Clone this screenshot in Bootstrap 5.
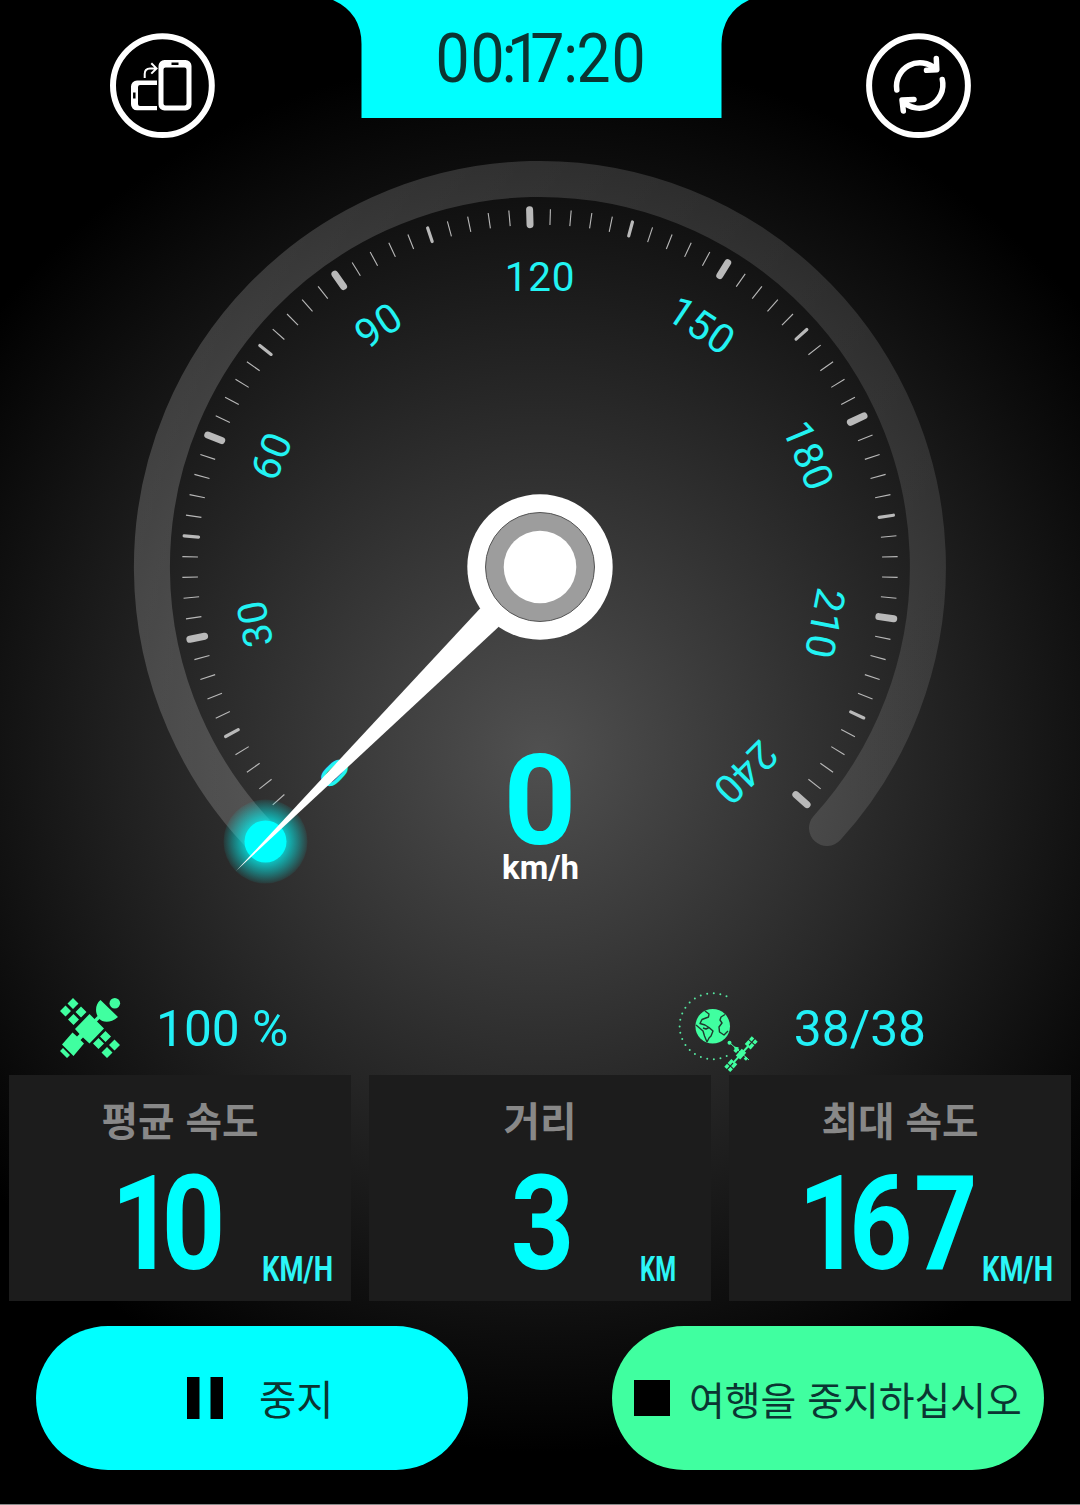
<!DOCTYPE html>
<html lang="ko">
<head>
<meta charset="utf-8">
<meta name="viewport" content="width=device-width, initial-scale=1">
<title>km/h</title>
<link href="https://cdn.jsdelivr.net/npm/bootstrap@5.3.0/dist/css/bootstrap.min.css" rel="stylesheet">
<style>
body{background:#000;font-family:Roboto,"Noto Sans CJK KR",sans-serif}
.screen{width:1080px;height:1505px;background:radial-gradient(circle 700px at 540px 752px,#505050,#000);border-bottom:1px solid #8a8a8a;overflow:hidden}
.topbar{height:150px}
.round-btn{width:106px;height:106px;margin-top:33px}
.clock{width:416px;height:118px;margin-left:2px}
.dial{height:830px}
.dial-num{font-size:40.5px;letter-spacing:.8px;fill:#22f3f3;text-anchor:middle}
.status{height:95px;font-size:49.7px;color:#22f0f7;line-height:1}
.panels{gap:18px;padding:0 9px}
.panel{height:226px;background:#1c1c1c;padding-top:20px}
.panel-title{font:700 39.7px/48px "Noto Sans CJK KR",sans-serif;color:#888}
.readout{height:146px;margin-top:12px;overflow:visible}
.lcd{font-family:Roboto,sans-serif;font-weight:700;fill:#0ff;text-anchor:middle}
.unit{font-family:Roboto,sans-serif;font-weight:700;font-size:35px;fill:#2cf6f6}
.actions{padding:25px 36px 0}
.action{width:432px;height:144px;border-radius:72px;font-family:"Noto Sans CJK KR",sans-serif;color:#0b3532;border:0}
.action-pause{background:#0ff;padding-left:151px;font-size:40.5px}
.action-stop{background:#40ffa0;padding-left:22px;font-size:38.9px}
</style>
</head>
<body>
<main class="screen d-flex flex-column">
  <header class="topbar d-flex justify-content-between align-items-start px-0">
    <button class="round-btn btn p-0 border-0" style="margin-left:109px" aria-label="rotate">
      <svg width="106" height="106" viewBox="109 33 106 106" fill="none" stroke="#fff" class="d-block">
        <circle cx="162.4" cy="85.6" r="49.4" stroke-width="6"/>
        <path d="M157 80.5H137a6 6 0 0 0-6 6V104a6 6 0 0 0 6 6.300H157V106H140a2 2 0 0 1-2-2V87a2 2 0 0 1 2-2H157Z" fill="#fff" stroke="none"/>
        <path d="M134.300 92.500V98.500" stroke="#000" stroke-width="2.500"/>
        <path fill-rule="evenodd" fill="#fff" stroke="none" d="M164.500 60H185.500A6 6 0 0 1 191.500 66V104.500A6 6 0 0 1 185.500 110.500H164.500A6 6 0 0 1 158.500 104.500V66A6 6 0 0 1 164.500 60ZM165.500 67.500A2 2 0 0 0 163.500 69.500V103.500A2 2 0 0 0 165.500 105.500H184.500A2 2 0 0 0 186.500 103.500V69.500A2 2 0 0 0 184.500 67.500ZM171.500 62.500V65H178.500V62.500Z"/>
        <path d="M144.700 78V74Q144.700 68.500 150 68.500H156M151.300 63.200L156.500 68.400L151.300 73.600" stroke-width="2"/>
      </svg>
    </button>
    <svg class="clock d-block" viewBox="333 0 416 118">
      <path d="M333 0Q361.500 13 361.500 44V118H721.500V44Q722 13 749 0Z" fill="#0ff"/>
      <text transform="scale(.88 1)" y="82" font-size="69" font-family="Roboto" fill="#0b3532" text-anchor="middle" x="514.200 554 578.500 595.500 622 648.300 674.400 714.200">00:17:20</text>
    </svg>
    <button class="round-btn btn p-0 border-0" style="margin-right:109px" aria-label="reset">
      <svg width="106" height="106" viewBox="865 33 106 106" fill="none" stroke="#fff" class="d-block">
        <circle cx="918.500" cy="85.600" r="49.400" stroke-width="6"/>
        <g stroke-width="5.500" stroke-linecap="round" stroke-linejoin="round">
          <path d="M896.800 90A23.500 23.500 0 0 1 936 69M936.300 58.500L936.800 69.700L926.500 70.300"/>
          <path d="M942.300 79.500A23.500 23.500 0 0 1 902.500 101M914 99.400L902 100L903.300 111"/>
        </g>
      </svg>
    </button>
  </header>

  <svg class="dial d-block w-100" viewBox="0 150 1080 830" font-family="Roboto">
    <defs>
      <linearGradient id="track" gradientUnits="userSpaceOnUse" x1="134" y1="0" x2="946" y2="0"><stop stop-color="#fff" stop-opacity=".18"/><stop offset="1" stop-color="#fff" stop-opacity=".11"/></linearGradient>
      <radialGradient id="glow"><stop offset=".45" stop-color="#0ff" stop-opacity=".75"/><stop offset=".75" stop-color="#0ff" stop-opacity=".38"/><stop offset="1" stop-color="#0ff" stop-opacity=".06"/></radialGradient>
    </defs>
    <path d="M265.600 841.400A388 388 0 1 1 827 828" fill="none" stroke="url(#track)" stroke-width="36" stroke-linecap="round"/>
    <g id="ticks" stroke="#b9b9b9"></g>
    <g id="nums"></g>
    <circle cx="265.500" cy="841.500" r="42" fill="url(#glow)"/>
    <circle cx="265.500" cy="841.500" r="21" fill="#0ff"/>
    <path d="M236 871L480.500 608L499 626.500Z" fill="#fff"/>
    <circle cx="540" cy="567" r="72.700" fill="#fff"/>
    <circle cx="540" cy="567" r="54.500" fill="#9d9d9d" stroke="#555" stroke-width="1"/>
    <circle cx="540" cy="567" r="36.300" fill="#fff"/>
    <text x="540" y="843.500" font-size="127" font-weight="700" fill="#0ff" text-anchor="middle">0</text>
    <text x="540.500" y="879" font-size="33" font-weight="700" fill="#fff" text-anchor="middle">km/h</text>
  </svg>

  <section class="status d-flex align-items-center">
    <svg width="64" height="64" viewBox="58 995 64 64" fill="#40ffa0" style="margin-left:58px">
      <path d="M73 997L78.500 1002.500L73 1008L67.500 1002.500ZM65.500 1004.500L71 1010L65.500 1015.500L60 1010ZM81 1005.500L86.500 1011L81 1016.500L75.500 1011ZM73.500 1013L79 1018.500L73.500 1024L68 1018.500Z"/>
      <path d="M105.500 1030L111 1035.500L105.500 1041L100 1035.500ZM98.500 1037L104 1042.500L98.500 1048L93 1042.500ZM114.500 1038.500L120 1044L114.500 1049.500L109 1044ZM107 1046L112.500 1051.500L107 1057L101.500 1051.500Z"/>
      <path d="M89.500 1013L104 1027.500L89.500 1042.500L83 1036.500L80.500 1039L84 1042.500L73.500 1055L62 1043.500L72.500 1031.500L77 1035.500L79.500 1033L75 1028ZM63 1047L70 1054L67 1057L60 1050Z"/>
      <path d="M100.500 999L118 1016C110 1023 102 1021 99.500 1018L95.500 1022L93 1019.500L97.500 1015C95 1010 95.500 1003 100.500 999Z"/>
      <circle cx="114.800" cy="1002.200" r="5.300"/>
    </svg>
    <span class="pt-1" style="margin-left:34px">100 %</span>
    <svg width="82" height="84" viewBox="677 990 82 84" style="margin-left:auto;margin-right:35px;margin-top:9px" fill="#40ffa0">
      <path d="M726.500 996.300A33 33 0 1 0 730.500 1054" fill="none" stroke="#55e8a0" stroke-width="2" stroke-linecap="round" stroke-dasharray="0 6.600"/>
      <circle cx="712.700" cy="1026.300" r="17.300"/>
      <g fill="none" stroke="#1f3a2d" stroke-width="1.400" stroke-linejoin="round">
        <path d="M705 1011L709 1014L708.500 1017L702 1019.500L700 1023.500L705 1025L709 1027.500L713 1031L711 1036L709 1038L707 1042M696 1025L703 1031L704.500 1036L707 1042M709 1027.500L706 1029L703 1028"/>
        <path d="M725 1014.500L721 1017L720 1020L722 1023L719 1027L719.500 1032L724 1035L728 1031"/>
      </g>
      <circle cx="729.500" cy="1042.800" r="2"/>
      <path d="M730 1043L749 1060" stroke="#40ffa0" stroke-width="1"/>
      <g transform="translate(741 1054.200) rotate(-48)">
        <rect x="-4.500" y="-3" width="9" height="6"/><rect x="-2.500" y="-8" width="5" height="3.500"/><rect x="-1.500" y="5" width="3" height="3"/>
        <rect x="-12" y="-1" width="24" height="2"/>
        <path d="M-20.500-4H-16.500V-.6H-20.500ZM-20.500 .6H-16.500V4H-20.500ZM-15.500-4H-10V-.6H-15.500ZM-15.500 .6H-10V4H-15.500ZM10-4H15.500V-.6H10ZM10 .6H15.500V4H10ZM16.500-4H20.500V-.6H16.500ZM16.500 .6H20.500V4H16.500Z"/>
      </g>
      <path d="M734 1046.500L739 1047.500L735 1051Z"/>
    </svg>
    <span class="pt-1" style="margin-right:154px">38/38</span>
  </section>

  <section class="panels d-flex">
    <div class="panel flex-fill text-center">
      <div class="panel-title">평균 속도</div>
      <svg class="readout d-block w-100" viewBox="9 1155 342 146">
        <text class="lcd" transform="scale(.84 1)" y="1269" font-size="132" x="170 230.500">10</text>
        <text class="unit" x="262" y="1281" textLength="71" lengthAdjust="spacingAndGlyphs">KM/H</text>
      </svg>
    </div>
    <div class="panel flex-fill text-center">
      <div class="panel-title">거리</div>
      <svg class="readout d-block w-100" viewBox="369 1155 342 146">
        <text class="lcd" transform="scale(.84 1)" y="1269" font-size="132" x="646">3</text>
        <text class="unit" x="640" y="1281" textLength="36" lengthAdjust="spacingAndGlyphs">KM</text>
      </svg>
    </div>
    <div class="panel flex-fill text-center">
      <div class="panel-title">최대 속도</div>
      <svg class="readout d-block w-100" viewBox="729 1155 342 146">
        <text class="lcd" transform="scale(.84 1)" y="1269" font-size="132" x="988 1048.500 1126">167</text>
        <text class="unit" x="982" y="1281" textLength="71" lengthAdjust="spacingAndGlyphs">KM/H</text>
      </svg>
    </div>
  </section>

  <section class="actions d-flex justify-content-between">
    <button class="action action-pause d-flex align-items-center">
      <svg width="36" height="42" class="flex-shrink-0"><path d="M0 0H12.500V42H0ZM23.500 0H36V42H23.500Z"/></svg>
      <span class="text-nowrap" style="margin-left:36px">중지</span>
    </button>
    <button class="action action-stop d-flex align-items-center">
      <svg width="36" height="36" class="flex-shrink-0"><path d="M0 0H36V36H0Z"/></svg>
      <span class="text-nowrap" style="margin-left:19px">여행을 중지하십시오</span>
    </button>
  </section>
</main>
<script src="https://cdn.jsdelivr.net/npm/bootstrap@5.3.0/dist/js/bootstrap.bundle.min.js"></script>
<script>
const ns = 'http://www.w3.org/2000/svg';
const add = (parent, tag, attrs, text) => {
  const el = document.createElementNS(ns, tag);
  for (const k in attrs) el.setAttribute(k, attrs[k]);
  if (text !== undefined) el.textContent = text;
  document.getElementById(parent).appendChild(el);
};
// 80 divisions of 3 km/h; the zero mark is covered by the needle
for (let i = 1; i <= 80; i++) {
  const major = i % 10 === 0, mid = i % 5 === 0;
  const half = major ? 7.5 : mid ? 7.2 : 7.8;
  add('ticks', 'line', {
    x1: 540, x2: 540, y1: 217 - half, y2: 217 + half,
    'stroke-width': major ? 7 : mid ? 3.2 : 1.1,
    'stroke-linecap': mid || major ? 'round' : 'butt',
    transform: `rotate(${-135 + i * 10 / 3} 540 567)`
  });
}
for (let v = 0; v <= 240; v += 30)
  add('nums', 'text', {class: 'dial-num', x: 540, y: 290.5, transform: `rotate(${(v - 120) * 1.125} 540 567)`}, v);
</script>
</body>
</html>
